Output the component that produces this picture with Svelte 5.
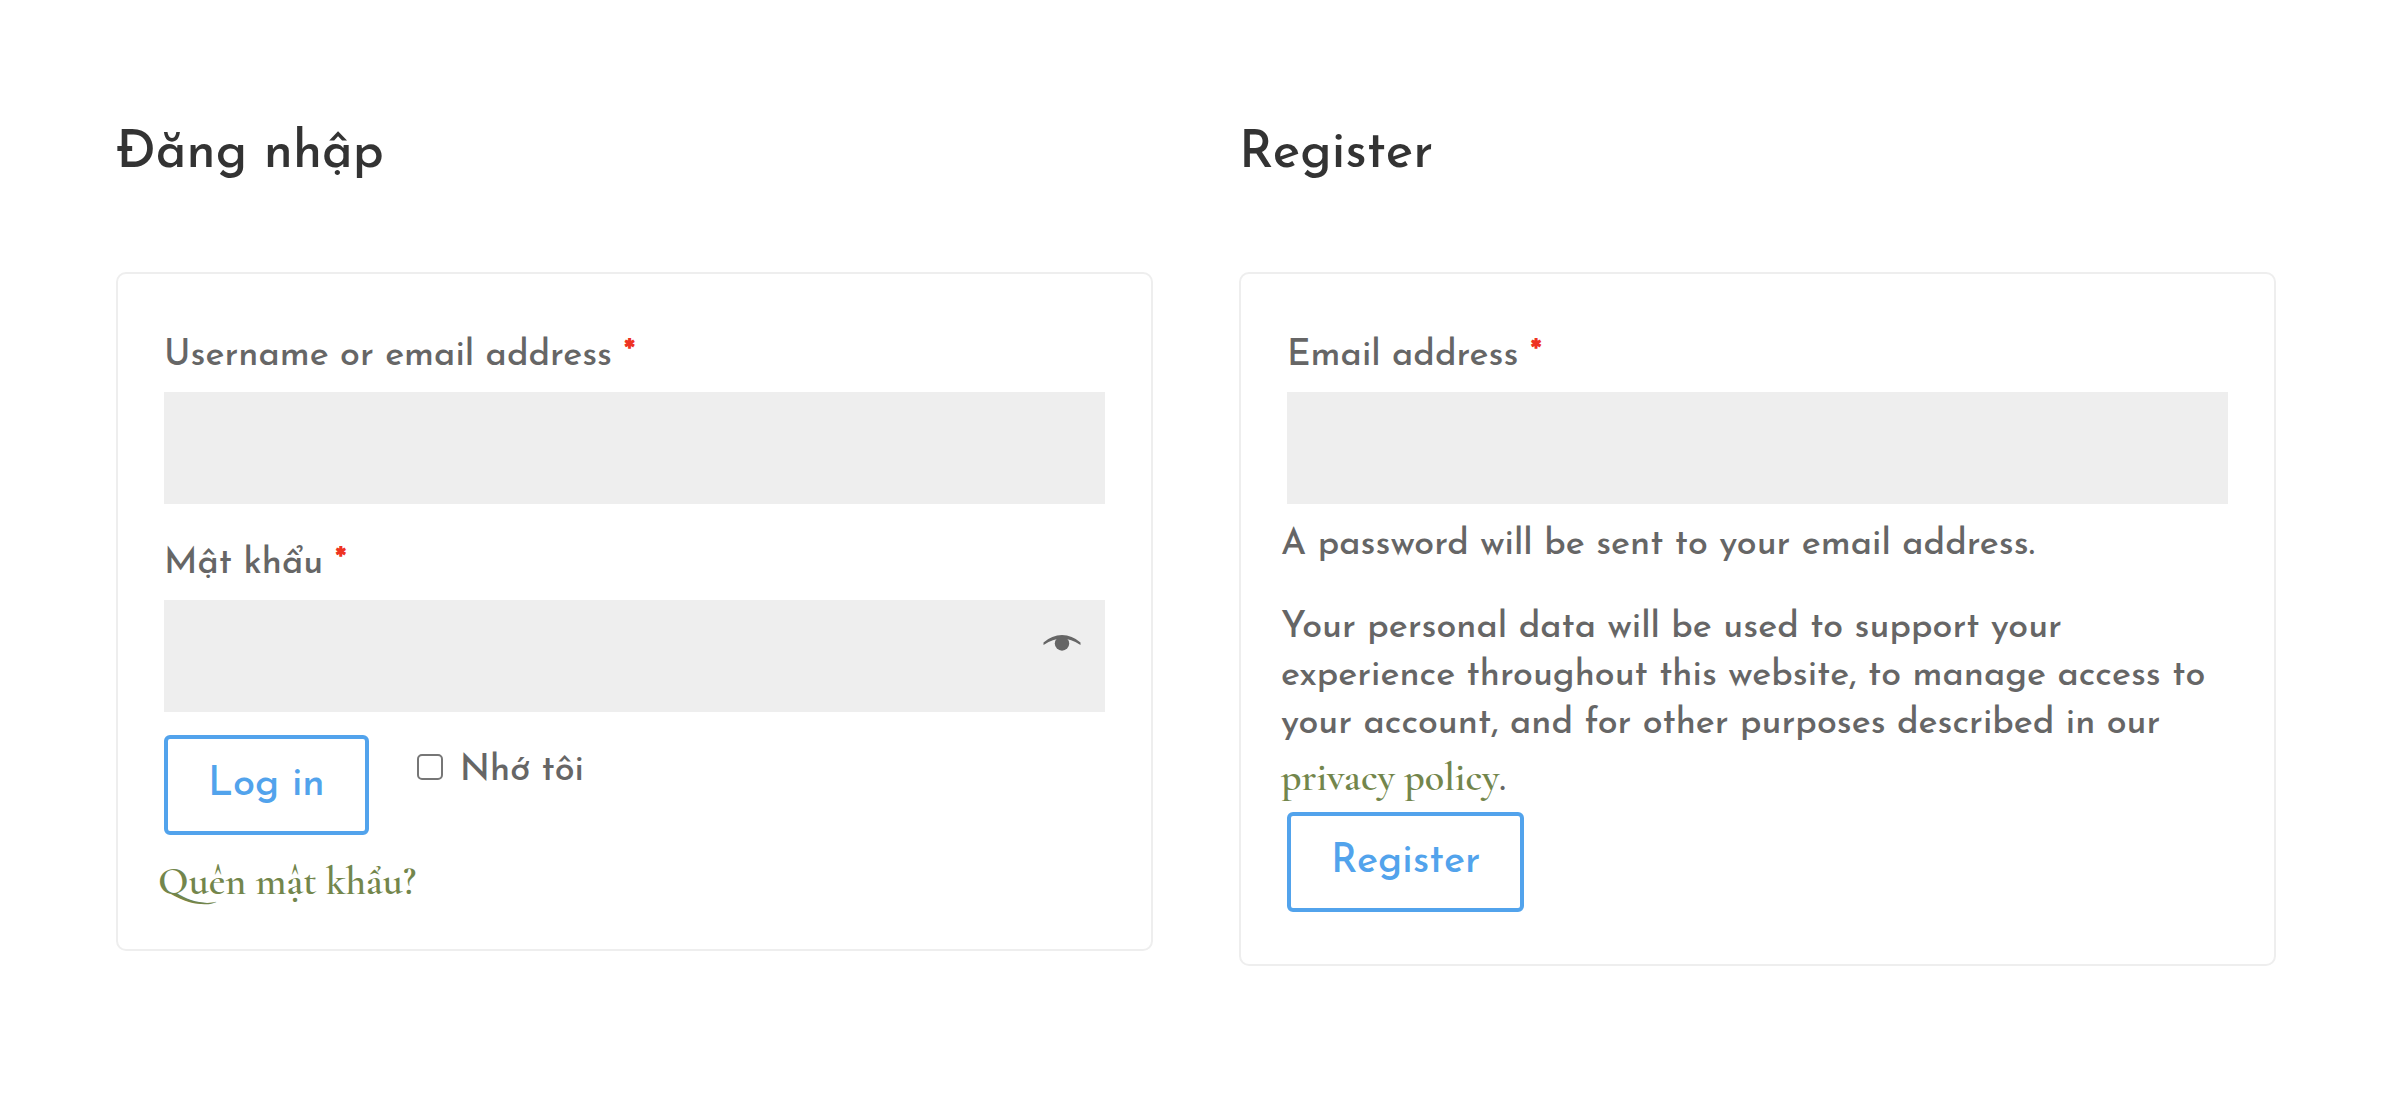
<script lang="ts">
  let username = $state("");
  let password = $state("");
  let email = $state("");
  let remember = $state(false);
  let showPassword = $state(false);

  function handleSubmit(event: SubmitEvent) {
    event.preventDefault();
  }
</script>

<main class="account">
  <section class="column">
    <h2>Đăng nhập</h2>

    <form class="card" onsubmit={handleSubmit}>
      <div class="form-row">
        <label for="username">Username or email address <span class="required">*</span></label>
        <input id="username" class="field" type="text" autocomplete="username" bind:value={username} />
      </div>

      <div class="form-row">
        <label for="password">Mật khẩu <span class="required">*</span></label>
        <div class="password-field">
          <input
            id="password"
            class="field"
            type={showPassword ? "text" : "password"}
            autocomplete="current-password"
            bind:value={password}
          />
          <button
            type="button"
            class="toggle"
            aria-label="Show password"
            aria-pressed={showPassword}
            onclick={() => (showPassword = !showPassword)}
          >
            <svg viewBox="0 0 38 18" width="38" height="18" aria-hidden="true">
              <path d="M.5 8.5Q9 1 19 1t18.500 7.500v2.500Q28 4.500 19 4.500T.5 11z" />
              <circle cx="19" cy="9.500" r="7.200" />
            </svg>
          </button>
        </div>
      </div>

      <div class="actions">
        <button type="submit" class="button">Log in</button>
        <label class="remember">
          <input type="checkbox" bind:checked={remember} />
          <span>Nhớ tôi</span>
        </label>
      </div>

      <p class="lost-password"><a href="#lost-password">Quên mật khẩu?</a></p>
    </form>
  </section>

  <section class="column">
    <h2>Register</h2>

    <form class="card" onsubmit={handleSubmit}>
      <div class="form-row">
        <label for="email">Email address <span class="required">*</span></label>
        <input id="email" class="field" type="email" autocomplete="email" bind:value={email} />
      </div>

      <p>A password will be sent to your email address.</p>

      <p class="privacy">
        Your personal data will be used to support your experience throughout this website, to manage access to your
        account, and for other purposes described in our <a href="#privacy-policy">privacy policy</a>.
      </p>

      <div class="actions register">
        <button type="submit" class="button">Register</button>
      </div>
    </form>
  </section>
</main>

<style>
  :global(body) {
    margin: 0;
    background: #fff;
  }

  .account {
    display: grid;
    grid-template-columns: 1fr 1fr;
    align-items: start;
    gap: 86px;
    padding: 118px 122px 118px 116px;
    color: #666;
    font-family: "Josefin Sans", Lato, sans-serif;
    font-size: 36px;
    font-weight: 500;
    line-height: 48px;
  }

  h2 {
    margin: 0 0 82px;
    color: #333;
    font-size: 52px;
    font-weight: 500;
    line-height: 72px;
  }

  .card {
    padding: 40px;
    border: 2px solid #eee;
    border-radius: 10px;
  }

  .form-row {
    padding: 6px 6px 17px;
  }

  .form-row + .form-row {
    padding-top: 7px;
  }

  .form-row label {
    display: block;
    line-height: 72px;
  }

  .required {
    color: #ee3322;
    font-weight: 700;
  }

  .field {
    display: block;
    box-sizing: border-box;
    width: 100%;
    height: 112px;
    padding: 30px;
    border: none;
    border-radius: 0;
    background: #eee;
    color: #666;
    font: inherit;
  }

  .password-field {
    position: relative;
  }

  .toggle {
    position: absolute;
    top: 34px;
    right: 24px;
    display: flex;
    padding: 0;
    border: none;
    background: none;
    cursor: pointer;
  }

  .toggle svg {
    fill: #666;
  }

  .actions {
    display: flex;
    align-items: flex-start;
    gap: 48px;
    padding: 6px 6px 0;
  }

  .actions.register {
    padding-bottom: 12px;
  }

  .button {
    height: 100px;
    padding: 0 40px;
    border: 4px solid #52a3ec;
    border-radius: 6px;
    background: transparent;
    color: #52a3ec;
    font: inherit;
    font-size: 40px;
    cursor: pointer;
  }

  .remember {
    display: flex;
    align-items: baseline;
    gap: 17px;
    padding-top: 12px;
  }

  .remember input {
    appearance: none;
    width: 26px;
    height: 26px;
    margin: 0;
    border: 2px solid #767676;
    border-radius: 5px;
    background: #fff;
  }

  .remember input:checked {
    background: #52a3ec;
  }

  p {
    margin: 0;
  }

  .privacy {
    padding-top: 35px;
  }

  .privacy a {
    line-height: 58px;
  }

  .lost-password {
    padding-top: 22px;
  }

  a {
    color: #73864c;
    font-family: "Cormorant Garamond", "Liberation Serif", serif;
    font-size: 40px;
    font-weight: 600;
    text-decoration: none;
  }
</style>
